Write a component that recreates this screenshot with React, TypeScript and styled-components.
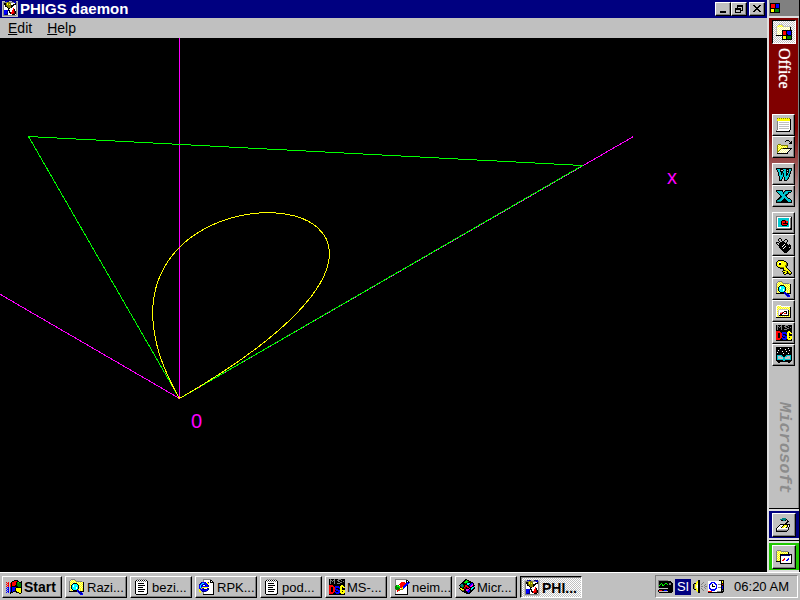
import React from "react";
import styled, { createGlobalStyle, css } from "styled-components";

const GlobalStyle = createGlobalStyle`
  * { box-sizing: border-box; }
  body {
    margin: 0;
    background: #000;
    font-family: "Liberation Sans", Arial, sans-serif;
    font-size: 13px;
    color: #000;
  }
  button { font-family: inherit; color: inherit; }
`;

/* ---------- pixel icons ---------- */

const palette: Record<string, string> = {
  k: "#000000",
  w: "#ffffff",
  g: "#808080",
  s: "#c0c0c0",
  r: "#ff0000",
  R: "#800000",
  b: "#0000ff",
  n: "#000080",
  y: "#ffff00",
  o: "#808000",
  c: "#00ffff",
  d: "#00c8d0",
  t: "#008080",
  l: "#00ff00",
  e: "#008000",
  m: "#ff00ff",
  p: "#ffff99",
};

const icons = {
  phigs: [
    "sssnbnnsssnnnnss",
    "sggggoooggggbbgs",
    "sgkkoyooowwwwkgs",
    "sgkkoyoyowwkkkgs",
    "sgwkoooookkkwwgs",
    "sgwkkooookkwwwgs",
    "sgwwwkoookwwwwgs",
    "sgwwwwkkwwwrwwgs",
    "sgwwwwkwwwwrkwgs",
    "sgbbbbkkwwrrkwgs",
    "sgbbbnwkwwrrRkgs",
    "sgbbbnwkkrrrRkgs",
    "sgbbbnwwkrrRRkgs",
    "sgbnnnwwwwkkkwgs",
    "sgggggggggggggss",
    "ssssssssssssssss",
  ],
  flag: [
    "........kkkk....",
    "......kkrrrkk..k",
    "r.r..krrrrkelkkk",
    ".rr.rkrrrrkeeeek",
    "r.r.rkrrrrkeeeek",
    ".rr.rkrrrkkeeeek",
    "r.r.rkkkkkkkeeek",
    ".bb.bkbbbbkkkkkk",
    "b.b.bkbbbkyyyyyk",
    ".bb.bkbbbkyyyyyk",
    "b.b.bkbbbkyyyyyk",
    ".bb.bkbkkkkyyyyk",
    "b.b.kkk...kkkyyk",
    "....k........kk.",
  ],
  explorer: [
    "..gggg..........",
    ".gpypyg.........",
    "gpypypygggggg...",
    "gypypypypypypyk.",
    "gpypkkkkypypypk.",
    "gypkcccckypypyk.",
    "gykcwcccckypypk.",
    "gpkcwcccckpypyk.",
    "gykccccwckypypk.",
    "gpkccccwckpypyk.",
    "gypkcccckypypyk.",
    "gpypkkkkbbpypyk.",
    "kkkkkkkkbnbkkkk.",
    ".........bnbb...",
    "..........bnnb..",
    "...........bbb..",
  ],
  notepad: [
    "...g.g.g.g.g....",
    "..kwkwkwkwkwk...",
    ".kwgwgwgwgwgwk..",
    ".kwwwwwwwwwwwk..",
    ".kwwkkkkkkwwwk..",
    ".kwwwwwwwwwwwk..",
    ".kwwkkkkkkkwwk..",
    ".kwwwwwwwwwwwk..",
    ".kwwkkkkkwwwwk..",
    ".kwwwwwwwwwwwk..",
    ".kwwkkkkkkkwwk..",
    ".kwwwwwwwwwwwk..",
    ".kwwkkkkkkwwwk..",
    ".kwwwwwwwwwwwk..",
    ".kwwwwwwwwwwgk..",
    "..kkkkkkkkkkk...",
  ],
  internet: [
    "....gggggggg....",
    "....gwwwwwwkk...",
    "....gwwwwwwkwk..",
    "..nbbbnwynwkkkk.",
    ".nbccbbbyywwwwk.",
    "nbcbnnbbnwwwwwk.",
    "bcbnwwnbbnwwwwk.",
    "bcbbbbbbbnwwwwk.",
    "bcbyyyyyywwwwwk.",
    "bbybnwwwnnwwwwk.",
    "ybbbnnnbbnwwwwk.",
    "y.nbbbbbnwwwwwk.",
    "yy.nnnngwwwwwwk.",
    ".y..gwwwwwwwwwk.",
    "....gwwwwwwwwwk.",
    "....kkkkkkkkkkk.",
  ],
  dos: [
    "kgkkkgkkkgggkkkk",
    "kggkggkkggkkgkkk",
    "kgkgkgkkkggkkkgk",
    "kgkkkgkkkkkggkkk",
    "kgkkkgkkgggkkkkk",
    "kkkkkkkkkkkkkkkk",
    "rrrrkkkkkkkkyykk",
    "rrrrrkbbbbkyyyyk",
    "rrkkrrbbbbbyykyy",
    "rrkkrrbkkkbyykkk",
    "rrkkrrbbbkkyykkk",
    "rrkkrrkbbbbyyyyy",
    "rrkkrrbkkbbyykyy",
    "rrrrrkbbbbbyyyyy",
    "rrrrkkkbbbkkyyyk",
    "kkkkkkkkkkkkkkkk",
  ],
  paint: [
    ".gggggggggggg...",
    ".gwwwwwwwwwwkk..",
    ".gwwwwwwwwwwkwk.",
    ".gwwwwwrrrrwkbkb",
    ".gwwwwrrrrrrbbb.",
    ".gwwwrrrrrrbbb..",
    ".gelewrrrrbbbk..",
    ".eelllrrrbbbwk..",
    ".eeeelrrybbwwk..",
    ".eeeeewyybwwwk..",
    ".geeerooowwwwk..",
    ".gwrrowwwwwwwk..",
    ".gwrwwwwwwwwwk..",
    ".gwwwwwwwwwwwk..",
    ".gwwwwwwwwwwwk..",
    ".kkkkkkkkkkkkk..",
  ],
  developer: [
    "......kk........",
    ".....kklkk......",
    "....kklllekk....",
    "...kklllekkkkk..",
    "..kkkkekccckbbk.",
    ".kttkkkkcckbbmk.",
    "ktttekrrkkbbmmkk",
    ".kttekrrrkkmmkk.",
    ".kkekrRkrrkkkcck",
    "kyykkRRkkkmkcckk",
    ".kyyykkmmmkkckk.",
    "..kookkmmbbkkk..",
    "...kkkkkbbbkk...",
    ".....kkkkbkk....",
    ".......kkkk.....",
    "................",
  ],
  office: [
    "kkkkkkkkkk",
    "krrrrkbbbk",
    "krrrrkbbbk",
    "krrrrkbbbk",
    "krrrrkbbbk",
    "kkkkkkkkkk",
    "kyyykeeeek",
    "kyyykeeeek",
    "kyyykeeeek",
    "kkkkkkkkkk",
  ],
  folderOffice: [
    "..ssss..........",
    ".spypys.........",
    "spypypysssssss..",
    "spwpwpwpwpwpwpk.",
    "swpwpwpwpwpwpwk.",
    "spwpwpwpwpwpwpk.",
    "swpwpwkkkkkkkkkk",
    "spwpwpkrrrkbbbbk",
    "swpwpwkrrrkbbbbk",
    "spwpwpkrrrkbbbbk",
    "swpwpwkrrrkkbbbk",
    "kkkkkkkkkkkkkkkk",
    "......kyyykeeeek",
    "......kyyykeeeek",
    "......kyyykeeeek",
    "......kkkkkkkkkk",
  ],
  newDoc: [
    ".oyoyoyoyoyoyo..",
    ".yyyyyyyyyyyyyk.",
    ".yyyyyyyyyyyyyk.",
    ".gwwwwwwwwwwwwk.",
    ".gwsssssssssswk.",
    ".gwwwwwwwwwwwwk.",
    ".gwsssssssssswk.",
    ".gwwwwwwwwwwwwk.",
    ".gwsssssssssswk.",
    ".gwwwwwwwwwwwwk.",
    ".gwsssssssssswk.",
    ".gwwwwwwwwwwwwk.",
    "gwwwwwwwwwwwwk..",
    "kkkkkkkkkkkkkk..",
  ],
  openDoc: [
    "..........kkk...",
    ".........k...k.k",
    "..............kk",
    ".............kkk",
    "..ooo...........",
    ".opypooooooo....",
    ".oypypypypyo....",
    ".opypypypypo....",
    ".oypyookkkkkkkkk",
    ".opyowpwpwpwpwk.",
    ".oyowpwpwpwpwk..",
    ".oowpwpwpwpwk...",
    ".owpwpwpwpwk....",
    ".kkkkkkkkkkk....",
  ],
  word: [
    "kkkkkkkkkkkkkkkk",
    "kdddkkkdddkkkddk",
    ".kddk..kddk.kddk",
    ".kddkkkdddkkkdk.",
    "..kddkkdddk.kdk.",
    "..kddktkddkkdtk.",
    "..kddkdkddkkdk..",
    "..kddddkddkdtk..",
    "...kdddkdddddk..",
    "...kddk.kdddk...",
    "...kddk.kddtk...",
    "...kdk..kddk....",
    "...kkk..kkk.....",
  ],
  excel: [
    "kkkkkkk..kkkkkkk",
    "kdddddk.ktdddddk",
    ".kdddddktdddkkk.",
    "..kddddkdddtk...",
    "...kdddddtkk....",
    "....kddddkk.....",
    "....kkddddk.....",
    "...kktdddddk....",
    "..kktdddkdddkk..",
    ".kktdddkkkddddk.",
    "ktddddkkkkkddddk",
    "kttttkkkkkkkdddk",
    "kkkkkkkkkkkkkkkk",
  ],
  powerpoint: [
    "gggggggggggggggg",
    "gwwwwwwwwwwwwwwk",
    "gwdddddddddddwgk",
    "gwdddddddddddwgk",
    "gwddddkkkrdddwgk",
    "gwdddkrrrkrrdwgk",
    "gwdddkrrrkrrdwgk",
    "gwdddkrkkkkkdwgk",
    "gwdddkrrrrrkdwgk",
    "gwddddkkkkkddwgk",
    "gwdddddddddddwgk",
    "gwwwwwwwwwwwwwgk",
    "ggggggggggggggkk",
    "kkkkkkkkkkkkkkkk",
  ],
  binder: [
    "...kk...........",
    "..k..k...kk.....",
    "..k..k..k..k....",
    "...k..kk...k....",
    "kkk.kkkkk.k.....",
    "k..kkkkkkkk.....",
    ".k.kkkkkwkkk.k..",
    "..kkkkkwkkkkkkk.",
    "...kkkwkkwkkkkk.",
    "...kkkkkwkkkk.k.",
    "....kkkwkkkkkkk.",
    ".....kkkkkkkkk..",
    "......kkkkkkk...",
    ".......kkkkk....",
    "........kkk.....",
  ],
  key: [
    "..kkkkkk........",
    ".kyyyyyykk......",
    "kyywwyyyyyk.....",
    "kywkkyyyyyok....",
    "kyykkyyyyyok....",
    "kyyyyyyyyook....",
    ".kyyyyyyyok.....",
    "..kkooooyyk.....",
    "....kkkkyyyk....",
    ".......kyyyyk...",
    ".......kkoyyyk..",
    "......kyyyokyyk.",
    ".......kkyykoyyk",
    ".......kyykkkook",
    "........kk...kk.",
  ],
  photo: [
    ".wwww...........",
    "wpypywwwwwwwww..",
    "wypypypypypypyk.",
    "wpypypypypypypk.",
    "wypssssssssspyk.",
    "wpswwwwwwwwwkpk.",
    "wyswwwwwkkkwkyk.",
    "wpswssrkwwkwkpk.",
    "wyswrrkwrrkwkyk.",
    "wpswkkwwwwwwkpk.",
    "wyskkkkkkkkkkyk.",
    "wpypypypypypypk.",
    "kkkkkkkkkkkkkkk.",
  ],
  night: [
    "kkkkkkkkkkkkkkkk",
    "kkkkwkkkkkkkwkkk",
    "kkkkkkkkkwkkkkkk",
    "kkwkkkkkkkkkkwkk",
    "kkkkkkwkkkwkkkkk",
    "kwkkkkkkkkkkkkkk",
    "kkkkkkkwkkkkwkkk",
    "kkkkkkkkkkkkkkkk",
    "kdddddkkkkdddddk",
    "kdsssddkkddsssdk",
    "kdsssssddsssssdk",
    "kdsssssddsssssdk",
    "kddddddddddddddk",
    "kkkkkkkddkkkkkkk",
    ".kkkkkkkkkkkkkk.",
    "..kk........kk..",
  ],
  desk: [
    "......tttt......",
    "....ttttttk.....",
    ".....kkttk.k....",
    "...........kk...",
    "..........kk....",
    ".........kk.....",
    "....kkkkkkkkkk..",
    "...kwwwkyyykwk..",
    "..kwswkyywykwk..",
    ".kwwwkyywyksk...",
    "kwwwwwwwwwwwk...",
    "kwssssssssssk...",
    "kggggggggggk....",
    "kkkkkkkkkkk.....",
  ],
  program: [
    ".gggg...........",
    "gpypyggggggg....",
    "gypypypypypyk...",
    "gpypypypypypk...",
    "gypykkkkkkkkkkkk",
    "gpypknnnnnnnnnsk",
    "gypykwwwwwwwwwwk",
    "gpypkwwwwwwwwwwk",
    "gypykwwwrwwwbwwk",
    "gpypkwwrrwwbbwwk",
    "gypykwrrwwbbwwwk",
    "kkkkkwwwwwwwwwwk",
    "....kwwwwwwwwwwk",
    "....kkkkkkkkkkkk",
  ],
  monitor: [
    "gggggggggg......",
    "gkkkkkkkkkkkk...",
    "gkkkkkkkkkkkkk..",
    "gkklkkkllkkggkk.",
    "gklklklkklkggkk.",
    "glkkllkkkkkkkkk.",
    "gkkkkkkkkkkkkkk.",
    "gkkkkkkkkkkkkkk.",
    ".ssssssssskkkkk.",
    ".kkkkkkkkkkkkkk.",
    "krrrkkbbbkkkkkk.",
    "kssssssssskkkkk.",
    ".kkkkkkkkkkkkk..",
  ],
  speaker: [
    "......kk........",
    ".....ykk........",
    "....yykk...g....",
    "..kkypkk..g.....",
    ".kgyypkk.g...g..",
    ".kgypwkk....g...",
    ".kgypwkk.gg..gg.",
    ".kgypwkk....g...",
    ".kgyypkk.g...g..",
    "..kkypkk..g.....",
    "....yykk...g....",
    ".....ykk........",
    "......kk........",
  ],
  scheduler: [
    "...........kkkkk",
    "wwwwwwwwwwwwwkyk",
    "wwwbbbbwwwwwwkyk",
    "wwbbwwbbwwwwwkkk",
    "wbbwkwwbbwgggkrk",
    "wbwwkwwwbwwwwkkk",
    "wbwwkkkwbwwwwkbk",
    "wbwwwwwwbwgggkbk",
    "wbbwwwwbbwwwwkbk",
    "wwbbbbbbwwwwwkkk",
    "wwwbbbbwwwwwwkgk",
    "rrrrwwwwwggggkkk",
    "kkkkkkkkkkkkkkk.",
  ],
  minimize: ["........", "........", "........", "........", "........", "........", ".kkkkkk.", ".kkkkkk."],
  restore: [
    "..kkkkkk",
    "..kkkkkk",
    "..k....k",
    "kkkkkk.k",
    "kkkkkk.k",
    "k....kkk",
    "k....k..",
    "kkkkkk..",
  ],
  close: [
    "kk....kk",
    ".kk..kk.",
    "..kkkk..",
    "...kk...",
    "..kkkk..",
    ".kk..kk.",
    "kk....kk",
  ],
};

type IconName = keyof typeof icons;

const IconSvg = styled.svg`
  display: block;
  flex: none;
`;

function PixelIcon({ name }: { name: IconName }) {
  const rows = icons[name];
  const width = rows[0].length;
  const pixels: React.ReactNode[] = [];
  rows.forEach((row, y) => {
    let x = 0;
    while (x < row.length) {
      let end = x + 1;
      while (end < row.length && row[end] === row[x]) end++;
      if (row[x] !== ".") {
        pixels.push(
          <rect key={`${x}-${y}`} x={x} y={y} width={end - x} height={1} fill={palette[row[x]]} />
        );
      }
      x = end;
    }
  });
  return (
    <IconSvg
      width={width}
      height={rows.length}
      viewBox={`0 0 ${width} ${rows.length}`}
      shapeRendering="crispEdges"
      aria-hidden="true"
    >
      {pixels}
    </IconSvg>
  );
}

/* ---------- shared looks ---------- */

const raised = css`
  border: 1px solid;
  border-color: #fff #000 #000 #fff;
  box-shadow: inset -1px -1px #808080;
  background: #c0c0c0;
`;

const dither = css`
  background: repeating-conic-gradient(#fff 0 25%, #c0c0c0 0 50%) 0 0 / 2px 2px;
`;

const Screen = styled.div`
  display: flex;
  flex-direction: column;
  min-height: 100vh;
`;

const Desktop = styled.div`
  display: flex;
  flex: 1;
  min-height: 0;
`;

/* ---------- application window ---------- */

const Window = styled.main`
  display: flex;
  flex-direction: column;
  flex: 1;
  min-width: 0;
`;

const TitleBar = styled.header`
  display: flex;
  align-items: center;
  height: 18px;
  padding: 0 2px;
  background: #000080;
  color: #fff;
`;

const Title = styled.h1`
  flex: 1;
  margin: 0 0 0 2px;
  font-size: 15px;
  line-height: 18px;
  font-weight: bold;
`;

const WindowButtons = styled.div`
  display: flex;
`;

const WindowButton = styled.button<{ $apart?: boolean }>`
  ${raised}
  display: flex;
  align-items: center;
  justify-content: center;
  width: 16px;
  height: 14px;
  margin-left: ${(p) => (p.$apart ? "2px" : "0")};
  padding: 0 1px 1px 0;
`;

const MenuBar = styled.nav`
  display: flex;
  gap: 3px;
  height: 20px;
  padding: 0 2px;
  background: #c0c0c0;
`;

const MenuButton = styled.button`
  padding: 0 6px;
  border: 0;
  background: none;
  font-size: 14px;
  line-height: 19px;
`;

const Plot = styled.svg`
  display: block;
  flex: 1;
  width: 100%;
  min-height: 0;
  background: #000;
`;

const PlotLabel = styled.text`
  font-family: "Liberation Sans", Arial, sans-serif;
  font-size: 20px;
  fill: #f0f;
`;

/* ---------- shortcut bar ---------- */

const ShortcutBar = styled.aside`
  display: flex;
  flex-direction: column;
  flex: none;
  width: 33px;
  border-left: 2px solid #dfdfdf;
  border-right: 1px solid #000;
  background: #c0c0c0;
`;

const BarCaption = styled.div`
  height: 18px;
  padding: 3px 1px;
  border-bottom: 2px solid #dfdfdf;
  background: #808080;
`;

const BarBody = styled.div`
  display: flex;
  flex-direction: column;
  align-items: center;
  flex: 1;
  padding: 2px 1px 0;
  border-right: 1px solid #808080;
  background: linear-gradient(#800000 0, #800000 110px, #c0c0c0 194px);
`;

const OfficeButton = styled.button`
  ${dither}
  display: flex;
  align-items: center;
  justify-content: center;
  width: 24px;
  height: 24px;
  padding: 0;
  border: 1px solid;
  border-color: #000 #fff #fff #000;
`;

const OfficeName = styled.span`
  height: 70px;
  padding-top: 4px;
  writing-mode: vertical-rl;
  font-family: "Liberation Serif", "Times New Roman", serif;
  font-size: 16px;
  line-height: 18px;
  color: #fff;
  -webkit-text-stroke: 1px transparent;
  text-shadow: 0 0 1px #fff;
`;

const ToolGroup = styled.div`
  display: flex;
  flex-direction: column;
  margin-bottom: 5px;
`;

const ToolButton = styled.button`
  ${raised}
  display: flex;
  align-items: center;
  justify-content: center;
  width: 23px;
  height: 22px;
  padding: 0;
`;

const DockButton = styled(ToolButton)`
  width: 24px;
  height: 24px;
`;

const Brand = styled.span`
  margin-top: auto;
  padding-bottom: 14px;
  writing-mode: vertical-rl;
  font-family: "Liberation Mono", "Courier New", monospace;
  font-size: 17px;
  font-style: italic;
  font-weight: bold;
  line-height: 20px;
  color: #8c8c8c;
`;

const DockPanel = styled.div<{ $color: string }>`
  display: flex;
  align-items: center;
  justify-content: center;
  height: 32px;
  border-top: 1px solid #000;
  border-bottom: 2px solid #dfdfdf;
  box-shadow: inset 0 2px #dfdfdf;
  padding-top: 2px;
  background: ${(p) => p.$color};
`;

/* ---------- taskbar ---------- */

const Taskbar = styled.footer`
  display: flex;
  align-items: flex-start;
  height: 28px;
  padding: 2px 2px 0;
  border-top: 1px solid #fff;
  background: #c0c0c0;
`;

const TaskButton = styled.button<{ $kind?: "start" | "active" }>`
  ${raised}
  display: flex;
  align-items: center;
  gap: 2px;
  flex: 0 1 62px;
  height: 22px;
  margin: 1px 3px 0 0;
  padding: 0 3px;
  font-size: 13px;
  white-space: nowrap;
  overflow: hidden;
  ${(p) =>
    p.$kind &&
    css`
      font-size: 14px;
      font-weight: bold;
    `}
  ${(p) =>
    p.$kind === "start" &&
    css`
      flex-basis: 60px;
    `}
  ${(p) =>
    p.$kind === "active" &&
    css`
      ${dither}
      border-color: #000 #fff #fff #000;
      box-shadow: inset 1px 1px #808080;
      padding-top: 1px;
    `}
`;

const Tray = styled.div`
  display: flex;
  align-items: center;
  height: 23px;
  margin-left: auto;
  padding: 0 8px 0 2px;
  border: 1px solid;
  border-color: #808080 #fff #fff #808080;
`;

const Language = styled.span`
  width: 16px;
  margin: 0 1px;
  background: #000080;
  color: #fff;
  line-height: 16px;
  text-align: center;
`;

const Clock = styled.time`
  margin-left: 10px;
  line-height: 20px;
`;

const tasks: { label: string; icon: IconName; active?: boolean }[] = [
  { label: "Razi...", icon: "explorer" },
  { label: "bezi...", icon: "notepad" },
  { label: "RPK...", icon: "internet" },
  { label: "pod...", icon: "notepad" },
  { label: "MS-...", icon: "dos" },
  { label: "neim...", icon: "paint" },
  { label: "Micr...", icon: "developer" },
  { label: "PHI...", icon: "phigs", active: true },
];

const toolGroups: { icon: IconName; label: string }[][] = [
  [
    { icon: "newDoc", label: "New document" },
    { icon: "openDoc", label: "Open document" },
  ],
  [
    { icon: "word", label: "Word" },
    { icon: "excel", label: "Excel" },
  ],
  [
    { icon: "powerpoint", label: "PowerPoint" },
    { icon: "binder", label: "Binder" },
    { icon: "key", label: "Access" },
    { icon: "explorer", label: "Explorer" },
    { icon: "photo", label: "Pictures" },
    { icon: "dos", label: "MS-DOS" },
    { icon: "night", label: "Night sky" },
  ],
];

export default function App() {
  return (
    <Screen>
      <GlobalStyle />
      <Desktop>
        <Window>
          <TitleBar>
            <PixelIcon name="phigs" />
            <Title>PHIGS daemon</Title>
            <WindowButtons>
              <WindowButton aria-label="Minimize">
                <PixelIcon name="minimize" />
              </WindowButton>
              <WindowButton aria-label="Restore">
                <PixelIcon name="restore" />
              </WindowButton>
              <WindowButton aria-label="Close" $apart>
                <PixelIcon name="close" />
              </WindowButton>
            </WindowButtons>
          </TitleBar>
          <MenuBar>
            <MenuButton>
              <u>E</u>dit
            </MenuButton>
            <MenuButton>
              <u>H</u>elp
            </MenuButton>
          </MenuBar>
          <Plot role="img" aria-label="Bezier curve with its control polygon">
            <g fill="none" strokeWidth="1" shapeRendering="crispEdges">
              <path stroke="#f0f" d="M179.5 0V360M179.5 360.5L633.5 98.5M179.5 360.5L0.5 256.5" />
              <path stroke="#0f0" d="M179.5 360.5L28.5 98.5L582.5 127.5Z" />
              <path stroke="#ff0" d="M179.5 360.5C28.5 98.5 582.5 127.5 179.5 360.5" />
            </g>
            <PlotLabel x="191" y="390">
              0
            </PlotLabel>
            <PlotLabel x="667" y="146">
              x
            </PlotLabel>
          </Plot>
        </Window>
        <ShortcutBar>
          <BarCaption>
            <PixelIcon name="office" />
          </BarCaption>
          <BarBody>
            <OfficeButton aria-label="Office">
              <PixelIcon name="folderOffice" />
            </OfficeButton>
            <OfficeName>Office</OfficeName>
            {toolGroups.map((group, index) => (
              <ToolGroup key={index}>
                {group.map((tool) => (
                  <ToolButton key={tool.label} aria-label={tool.label}>
                    <PixelIcon name={tool.icon} />
                  </ToolButton>
                ))}
              </ToolGroup>
            ))}
            <Brand>Microsoft</Brand>
          </BarBody>
          <DockPanel $color="#000080">
            <DockButton aria-label="Desktop">
              <PixelIcon name="desk" />
            </DockButton>
          </DockPanel>
          <DockPanel $color="#20c800">
            <DockButton aria-label="Programs">
              <PixelIcon name="program" />
            </DockButton>
          </DockPanel>
        </ShortcutBar>
      </Desktop>
      <Taskbar>
        <TaskButton $kind="start">
          <PixelIcon name="flag" />
          Start
        </TaskButton>
        {tasks.map((task) => (
          <TaskButton key={task.label} $kind={task.active ? "active" : undefined}>
            <PixelIcon name={task.icon} />
            {task.label}
          </TaskButton>
        ))}
        <Tray>
          <PixelIcon name="monitor" />
          <Language>SI</Language>
          <PixelIcon name="speaker" />
          <PixelIcon name="scheduler" />
          <Clock>06:20 AM</Clock>
        </Tray>
      </Taskbar>
    </Screen>
  );
}
